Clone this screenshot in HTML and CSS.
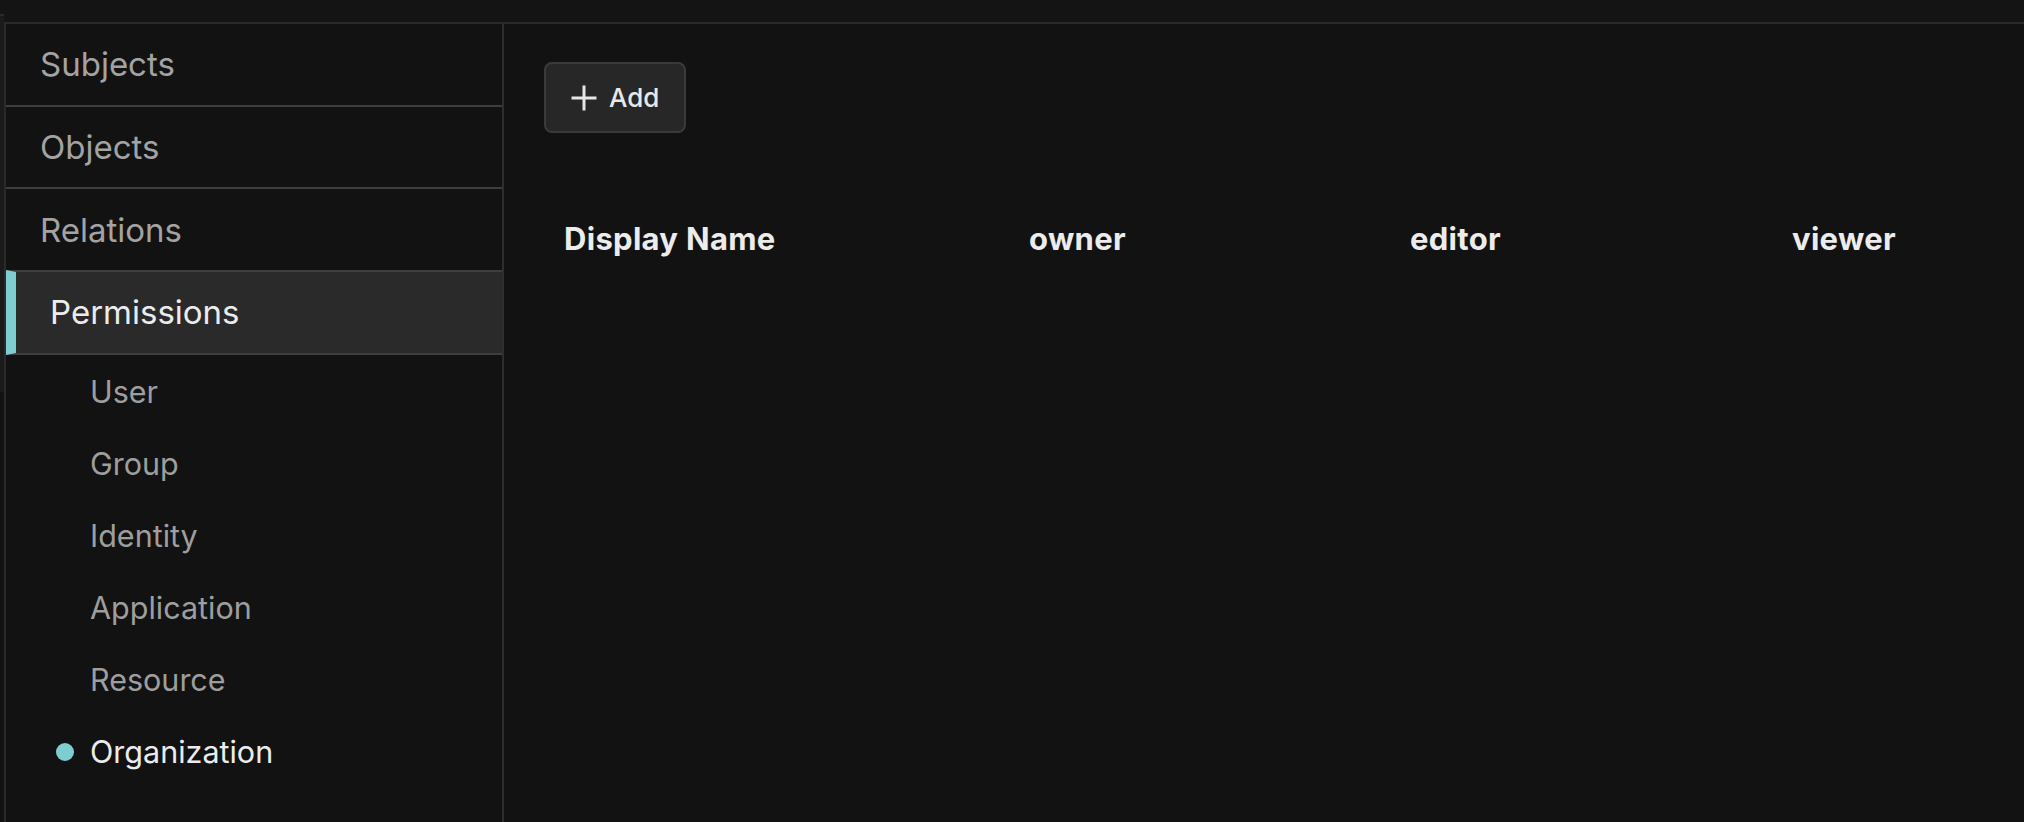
FILE: index.html
```html
<!DOCTYPE html>
<html lang="en">
<head>
<meta charset="utf-8">
<title>Permissions</title>
<link rel="stylesheet" href="styles.css">
</head>
<body>
<div class="app">
  <div class="edge"></div>
  <div class="window">
    <div class="topbar"></div>
    <div class="content">
      <nav class="sidebar">
        <a class="nav-item">Subjects</a>
        <a class="nav-item">Objects</a>
        <a class="nav-item">Relations</a>
        <a class="nav-item active">Permissions</a>
        <ul class="sub-list">
          <li class="sub-item"><span class="dot"></span>User</li>
          <li class="sub-item"><span class="dot"></span>Group</li>
          <li class="sub-item"><span class="dot"></span>Identity</li>
          <li class="sub-item"><span class="dot"></span>Application</li>
          <li class="sub-item"><span class="dot"></span>Resource</li>
          <li class="sub-item current"><span class="dot"></span>Organization</li>
        </ul>
      </nav>
      <main class="main">
        <button class="add-btn" type="button">
          <svg class="plus" width="28" height="28" viewBox="0 0 28 28" aria-hidden="true">
            <path d="M14 1.5v25M1.5 14h25" stroke="#e6e6e6" stroke-width="3" fill="none"/>
          </svg>
          <span>Add</span>
        </button>
        <div class="table">
          <div class="th">Display Name</div>
          <div class="th">owner</div>
          <div class="th">editor</div>
          <div class="th">viewer</div>
        </div>
      </main>
    </div>
  </div>
</div>
</body>
</html>
```

FILE: styles.css
```css
* { box-sizing: border-box; }

html, body {
  margin: 0;
  padding: 0;
  height: 100%;
  background: #121212;
  overflow: hidden;
}

body {
  font-family: Inter, "Noto Sans", "Liberation Sans", sans-serif;
  color: #ececec;
}

.app {
  display: flex;
  height: 100vh;
}

.edge {
  width: 4px;
  flex: none;
  background: linear-gradient(#141414 0 14px, #2a2a2a 14px 16px, #1b1b1b 16px 392px, #121212 392px);
}

.window {
  flex: 1;
  display: flex;
  flex-direction: column;
  min-width: 0;
}

.topbar {
  height: 24px;
  flex: none;
  background: #141414;
  border-bottom: 2px solid #2a2a2a;
}

.content {
  flex: 1;
  display: flex;
  min-height: 0;
}

.sidebar {
  width: 500px;
  flex: none;
  background: #121212;
  border-left: 2px solid #2a2a2a;
  border-right: 2px solid #2e2e2e;
  display: flex;
  flex-direction: column;
}

.nav-item {
  height: 82.67px;
  display: flex;
  align-items: center;
  padding-left: 34px;
  font-size: 33px;
  color: #a3a3a3;
  border-bottom: 2px solid #3e3e3e;
  text-decoration: none;
}

.nav-item.active {
  height: 85px;
  margin-top: -2px;
  background: #2a2a2a;
  color: #ececec;
  border-top: 2px solid #3e3e3e;
  border-left: 10px solid #7ecdd3;
}

.sub-list {
  list-style: none;
  margin: 0;
  padding: 1px 0 0;
}

.sub-item {
  height: 72px;
  display: flex;
  align-items: center;
  gap: 16px;
  padding-left: 50px;
  font-size: 30.5px;
  color: #9e9e9e;
}

.dot {
  width: 18px;
  height: 18px;
  border-radius: 50%;
  flex: none;
  visibility: hidden;
  background: #7ecdd3;
}

.sub-item.current { color: #ececec; }
.sub-item.current .dot { visibility: visible; }

.main {
  flex: 1;
  min-width: 0;
  padding: 38px 40px;
}

.add-btn {
  display: inline-flex;
  align-items: center;
  gap: 11px;
  height: 71px;
  padding: 0 25px 0 24px;
  background: #272727;
  border: 2px solid #3a3a3a;
  border-radius: 8px;
  color: #e8e8e8;
  font-family: inherit;
  font-size: 26px;
  font-weight: 500;
}

.plus { display: block; flex: none; }

.table {
  margin-top: 88px;
  display: grid;
  grid-template-columns: 465px 381px 382px 1fr;
}

.th {
  padding-left: 20px;
  font-size: 31px;
  font-weight: 700;
  letter-spacing: 0.3px;
  line-height: 36px;
  color: #ececec;
  white-space: nowrap;
}
```
